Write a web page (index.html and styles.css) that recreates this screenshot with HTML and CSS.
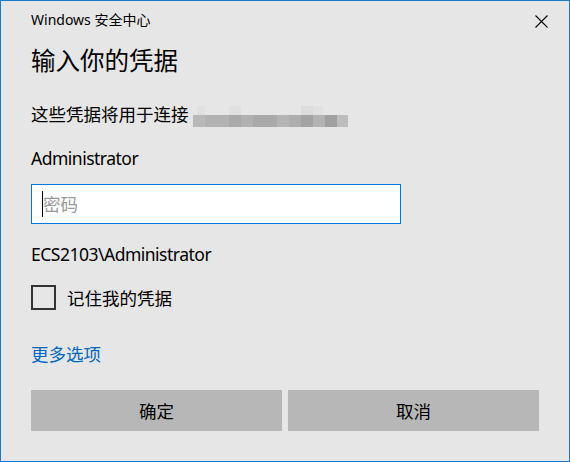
FILE: index.html
```html
<!DOCTYPE html>
<html lang="zh-CN">
<head>
<meta charset="utf-8">
<title>Windows 安全中心</title>
<link rel="stylesheet" href="styles.css">
</head>
<body>
<div class="window">
  <div class="titlebar">
    <span class="title">Windows 安全中心</span>
    <span class="close" aria-label="关闭">
      <svg width="13" height="13" viewBox="0 0 13 13"><path d="M0.5 0.5 L12.5 12.5 M12.5 0.5 L0.5 12.5" stroke="#000" stroke-width="1.1" fill="none"/></svg>
    </span>
  </div>
  <div class="content">
    <h1 class="heading">输入你的凭据</h1>
    <div class="desc">这些凭据将用于连接<span class="blur"><span class="blur-top"></span><span class="blur-strip"></span></span></div>
    <div class="user latin">Administrator</div>
    <div class="input"><span class="caret"></span><span class="placeholder">密码</span></div>
    <div class="domain latin">ECS2103\Administrator</div>
    <label class="remember"><span class="checkbox"></span><span>记住我的凭据</span></label>
    <a class="more">更多选项</a>
    <div class="buttons">
      <button class="btn">确定</button>
      <button class="btn">取消</button>
    </div>
  </div>
</div>
</body>
</html>
```
FILE: styles.css
```css
html, body {
  margin: 0;
  padding: 0;
  background: #e6e6e6;
}
body {
  font-family: "Noto Sans", "Noto Sans CJK SC", sans-serif;
  color: #000;
}
.window {
  width: 570px;
  height: 462px;
  box-sizing: border-box;
  border: 1px solid #1979ca;
  background: #e6e6e6;
  display: flex;
  flex-direction: column;
}
.titlebar {
  height: 37px;
  display: flex;
  align-items: center;
  justify-content: space-between;
  padding-left: 30px;
  padding-right: 21px;
}
.title {
  font-size: 14px;
  line-height: 20px;
}
.close {
  display: flex;
  width: 13px;
  height: 13px;
  margin-top: 3px;
}
.content {
  display: flex;
  flex-direction: column;
  align-items: flex-start;
  padding: 0 29px 0 30px;
  font-size: 17.5px;
  line-height: 24px;
}
.heading {
  margin: 7px 0 0 0;
  font-size: 24.5px;
  line-height: 32px;
  font-weight: normal;
}
.desc {
  margin-top: 24px;
  display: flex;
  align-items: center;
}
.blur {
  display: flex;
  flex-direction: column;
  margin-left: 4px;
  margin-top: 5px;
}
.blur-top {
  width: 155px;
  height: 9px;
  background: linear-gradient(to right, transparent 0, transparent 4px, #e0e0e0 4px, #e0e0e0 12px, transparent 12px, transparent 36px, #e0e0e0 36px, #e0e0e0 48px, transparent 48px, transparent 108px, #dcdcdc 108px, #dcdcdc 120px, #e1e1e1 120px, #e1e1e1 130px, transparent 130px);
}
.blur-strip {
  width: 155px;
  height: 12px;
  background: linear-gradient(to right, #b9b9b9 0, #b9b9b9 12px, #b2b2b2 12px, #b2b2b2 36px, #aaaaaa 36px, #aaaaaa 48px, #b1b1b1 48px, #b1b1b1 60px, #a9a9a9 60px, #a9a9a9 84px, #b4b4b4 84px, #b4b4b4 96px, #aeaeae 96px, #aeaeae 108px, #a3a3a3 108px, #a3a3a3 120px, #b3b3b3 120px, #b3b3b3 132px, #a0a0a0 132px, #a0a0a0 144px, #bdbdbd 144px);
}
.latin {
  letter-spacing: -0.5px;
}
.user {
  margin-top: 19px;
}
.input {
  margin-top: 14px;
  width: 370px;
  height: 40px;
  box-sizing: border-box;
  border: 1px solid #0078d7;
  background: #fff;
  display: flex;
  align-items: center;
  padding-left: 10px;
}
.caret {
  width: 1px;
  height: 26px;
  background: #000;
}
.placeholder {
  color: #999;
}
.domain {
  margin-top: 18px;
}
.remember {
  margin-top: 19px;
  display: flex;
  align-items: center;
  gap: 11px;
  height: 25px;
}
.checkbox {
  width: 25px;
  height: 25px;
  box-sizing: border-box;
  border: 2px solid #333;
}
.more {
  margin-top: 32px;
  color: #0067c0;
  cursor: pointer;
}
.buttons {
  margin-top: 24px;
  display: grid;
  grid-template-columns: 251px 251px;
  gap: 6px;
}
.btn {
  height: 41px;
  border: none;
  background: #b7b7b7;
  font-family: inherit;
  font-size: 17.5px;
  color: #000;
  padding: 0;
}
```
